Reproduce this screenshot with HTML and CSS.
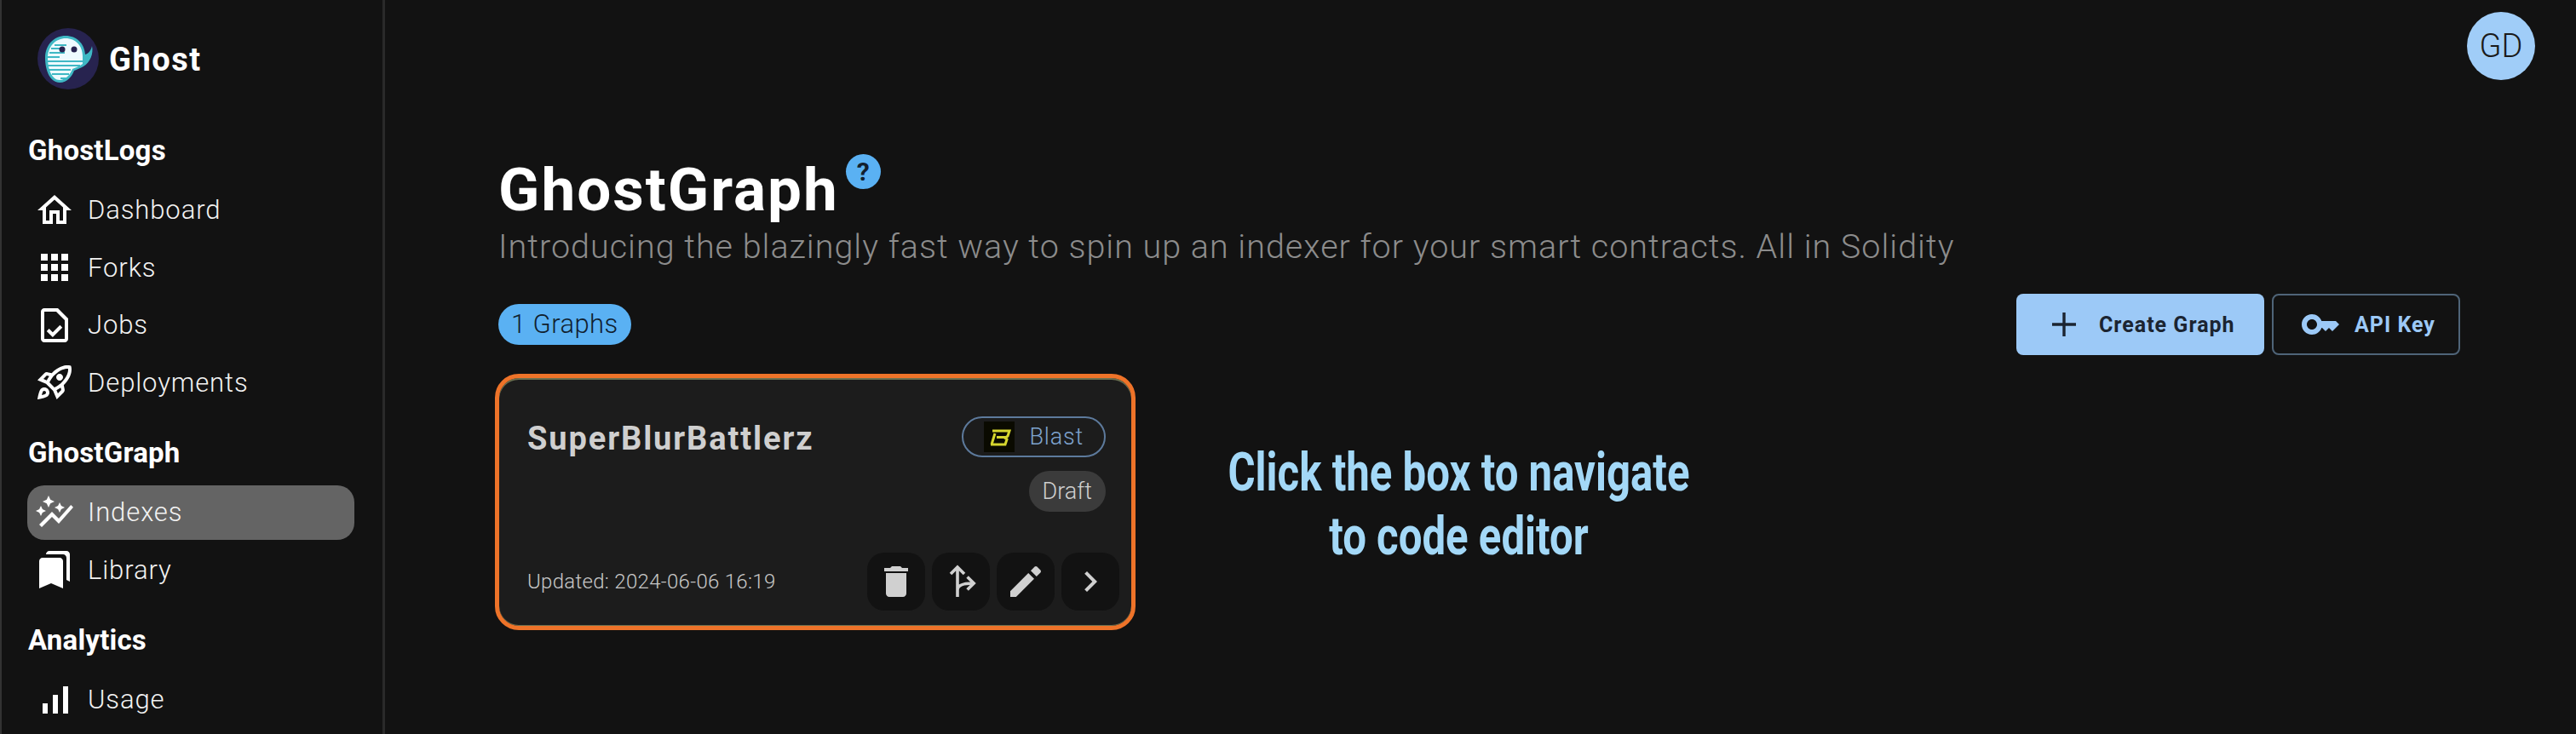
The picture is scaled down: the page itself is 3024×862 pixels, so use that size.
FILE: index.html
```html
<!DOCTYPE html>
<html lang="en">
	<head>
		<meta charset="utf-8">
		<title>GhostGraph</title>
		<link rel="stylesheet" href="styles.css">
	</head>
	<body>
		<aside class="sidebar">
			<div class="brand">
				<svg class="brand-logo" viewBox="0 0 72 72">
					<circle cx="36" cy="36" r="36" fill="#27234f"/>
					<path d="M9 35C9 19 20 9 33 9c13 0 22 9 23 22 4-1 7-5 8-10 2 9-2 19-10 24-3 2-7 3-11 5-2 6-8 14-17 14C15 64 9 50 9 35z" fill="#3fb8c4"/>
					<path d="M12 35C12 21 22 12 33 12c12 0 20 9 20 21v9c-4 3-8 4-12 6-2 6-8 13-15 13-9 0-14-13-14-26z" fill="#eefaff"/>
					<g stroke="#3fb8c4" stroke-width="2" fill="none">
						<path d="M14 29h18M12 34h14M12 39h46M12 44h38M13 49h26M17 54h20M27 59h8M20 20h14M16 24h10"/>
					</g>
					<circle cx="29" cy="25" r="3.5" fill="#27234f"/>
					<circle cx="43" cy="25" r="3.5" fill="#27234f"/>
				</svg>
				<span class="brand-name">Ghost</span>
			</div>

			<h3 class="nav-title">GhostLogs</h3>
			<a class="nav-item">
				<svg class="nav-icon" viewBox="0 0 24 24"><path d="M12 5.69l5 4.5V18h-2v-6H9v6H7v-7.81l5-4.5M12 3L2 12h3v8h6v-6h2v6h6v-8h3L12 3z"/></svg>
				Dashboard
			</a>
			<a class="nav-item">
				<svg class="nav-icon" viewBox="0 0 24 24"><path d="M4 8h4V4H4v4zm6 12h4v-4h-4v4zm-6 0h4v-4H4v4zm0-6h4v-4H4v4zm6 0h4v-4h-4v4zm6-10v4h4V4h-4zm-6 4h4V4h-4v4zm6 6h4v-4h-4v4zm0 6h4v-4h-4v4z"/></svg>
				Forks
			</a>
			<a class="nav-item">
				<svg class="nav-icon" viewBox="0 0 24 24"><path fill-rule="evenodd" d="M14 2H6c-1.1 0-2 .9-2 2v16c0 1.1.9 2 2 2h12c1.100 0 2-.9 2-2V8l-6-6zM6 4h7l5 5v11H6V4z"/><path d="M8.820 14.050L7.400 15.460 10.940 19l5.660-5.660-1.410-1.410-4.240 4.240-2.130-2.120z"/></svg>
				Jobs
			</a>
			<a class="nav-item">
				<svg class="nav-icon" viewBox="0 0 24 24"><path d="M6 15c-.83 0-1.58.34-2.12.88C2.7 17.06 2 22 2 22s4.94-.7 6.12-1.88c.54-.54.88-1.29.88-2.12 0-1.66-1.34-3-3-3zm.71 3.71c-.28.28-2.17.76-2.17.76s.47-1.88.76-2.17c.17-.19.42-.3.7-.3.55 0 1 .45 1 1 0 .28-.11.53-.29.71zm10.71-5.06c6.36-6.36 4.24-11.31 4.24-11.31S16.71.22 10.35 6.58l-2.49-.5c-.65-.13-1.33.08-1.81.55L2 10.69l5 2.14L11.17 17l2.14 5 4.05-4.05c.47-.47.68-1.15.55-1.81l-.49-2.49zM7.41 10.83l-1.91-.82 1.97-1.97 1.44.29c-.57.83-1.08 1.7-1.5 2.5zm6.58 7.67l-.82-1.91c.8-.42 1.67-.93 2.49-1.5l.29 1.44-1.96 1.97zM16 12.24c-1.32 1.32-3.38 2.4-4.04 2.73l-2.93-2.93c.32-.65 1.4-2.71 2.73-4.04 4.68-4.68 8.23-3.99 8.23-3.99s.69 3.55-3.99 8.23zM15 11c1.1 0 2-.9 2-2s-.9-2-2-2-2 .9-2 2 .9 2 2 2z"/></svg>
				Deployments
			</a>

			<h3 class="nav-title">GhostGraph</h3>
			<a class="nav-item active">
				<svg class="nav-icon" viewBox="0 0 24 24"><path d="M14.06 9.94L12 9l2.06-.94L15 6l.94 2.06L18 9l-2.06.94L15 12l-.94-2.06zM4 14l.94-2.06L7 11l-2.06-.94L4 8l-.94 2.06L1 11l2.06.94L4 14zm4.5-5l1.09-2.41L12 5.5l-2.41-1.09L8.5 2 7.41 4.41 5 5.5l2.41 1.09L8.5 9zm-4 11.5l6-6.01 4 4L23 8.93l-1.41-1.41-7.09 7.97-4-4L3 19l1.5 1.5z"/></svg>
				Indexes
			</a>
			<a class="nav-item">
				<svg class="nav-icon" viewBox="0 0 24 24"><path d="M19 18l2 1V3c0-1.1-.9-2-2-2H8.99C7.89 1 7 1.9 7 3h10c1.1 0 2 .9 2 2v13zM15 5H5c-1.1 0-2 .9-2 2v16l7-3 7 3V7c0-1.1-.9-2-2-2z"/></svg>
				Library
			</a>

			<h3 class="nav-title">Analytics</h3>
			<a class="nav-item">
				<svg class="nav-icon" viewBox="0 0 24 24"><path d="M17 4h3v16h-3V4zM5 14h3v6H5v-6zm6-5h3v11h-3V9z"/></svg>
				Usage
			</a>
		</aside>

		<main class="main">
			<header class="topbar">
				<div class="avatar">GD</div>
			</header>

			<section class="content">
				<div class="title-row">
					<h1 class="page-title">GhostGraph</h1>
					<span class="help-badge">?</span>
				</div>
				<p class="page-sub">Introducing the blazingly fast way to spin up an indexer for your smart contracts. All in Solidity</p>

				<div class="toolbar">
					<span class="count-pill">1 Graphs</span>
					<div class="toolbar-btns">
						<button class="btn btn-primary">
							<svg class="btn-icon" viewBox="0 0 28 28"><path d="M0 14h28M14 0v28" stroke="#1b2431" stroke-width="3.4" fill="none"/></svg>
							Create Graph
						</button>
						<button class="btn btn-outline">
							<svg class="btn-icon key-icon" viewBox="1 5 22 14"><path d="M21 10h-8.35C11.83 7.67 9.61 6 7 6c-3.31 0-6 2.69-6 6s2.69 6 6 6c2.61 0 4.83-1.67 5.65-4H13l2 2 2-2 2 2 4-4.04L21 10zM7 15c-1.65 0-3-1.35-3-3s1.35-3 3-3 3 1.35 3 3-1.35 3-3 3z"/></svg>
							API Key
						</button>
					</div>
				</div>

				<div class="graph-wrap">
					<article class="graph-card">
						<div class="card-top">
							<h2 class="card-name">SuperBlurBattlerz</h2>
							<div class="card-tags">
								<span class="chain-tag">
									<svg class="chain-logo" viewBox="0 0 36 36">
										<rect width="36" height="36" fill="#0a0a00"/>
										<path d="M10 11h20l-2 6-3 2.500 2 1.500-2 6H8M15 18.500h11M13 14l-4 13" stroke="#d6d62e" stroke-width="3" fill="none"/>
									</svg>
									Blast
								</span>
								<span class="status-tag">Draft</span>
							</div>
						</div>
						<div class="card-bottom">
							<span class="card-date">Updated: 2024-06-06 16:19</span>
							<div class="card-actions">
								<button class="icon-btn"><svg viewBox="0 0 24 24"><path d="M6 19c0 1.1.9 2 2 2h8c1.1 0 2-.9 2-2V7H6v12zM19 4h-3.5l-1-1h-5l-1 1H5v2h14V4z"/></svg></button>
								<button class="icon-btn"><svg viewBox="0 0 24 24"><path class="fork-line" d="M10 21V3.600M6 7.500l4-4 4 4M10 17c0-2.500 2-4 9-4M15.800 9.200l3.800 3.800-3.800 3.800"/></svg></button>
								<button class="icon-btn"><svg viewBox="0 0 24 24"><path d="M3 17.600V21h3.400L17 10.400 13.600 7zM15 5.600 18.400 9l2.300-2.300c.4-.4.4-1 0-1.400l-2-2c-.4-.4-1-.4-1.400 0z"/></svg></button>
								<button class="icon-btn"><svg viewBox="0 0 24 24"><path d="M10 6L8.590 7.410 13.170 12l-4.580 4.590L10 18l6-6z"/></svg></button>
							</div>
						</div>
					</article>
				</div>
				<div class="note">
					<span class="note-text">Click the box to navigate<br>to code editor</span>
				</div>
			</section>
		</main>
	</body>
</html>
```

FILE: styles.css
```css
html,body{ margin: 0; height: 100%; overflow: hidden; background: #121212; }
body{ display: flex; font-family: Roboto, "Liberation Sans", sans-serif; color: #fff; }
h1,h2,h3,p{ margin: 0; }
button{ font-family: inherit; cursor: pointer; }

/* sidebar */
.sidebar{ flex: 0 0 452px; box-sizing: border-box; height: 862px; padding: 33px 33px 0 30px; border-left: 2px solid #333; border-right: 3px solid #2a2a2a; overflow: hidden; }
.brand{ display: flex; align-items: center; gap: 12px; height: 72px; margin: 0 0 52px 12px; }
.brand-logo{ width: 72px; height: 72px; flex: none; }
.brand-name{ position: relative; top: 1px; font-size: 38px; font-weight: 700; letter-spacing: 1.500px; }
.nav-title{ height: 40px; line-height: 40px; margin: 31px 0 18px 1px; font-size: 33px; font-weight: 700; letter-spacing: .2px; }
.brand + .nav-title{ margin-top: 0; }
.nav-item{ display: flex; align-items: center; gap: 15px; height: 63.500px; margin-bottom: 4px; padding-left: 8px; border-radius: 20px; font-size: 31px; font-weight: 300; letter-spacing: .9px; color: #f2f2f2; }
.nav-item.active{ background: #646464; }
.nav-icon{ width: 48px; height: 48px; flex: none; fill: #fff; }

/* main */
.main{ flex: 1; min-width: 0; }
.topbar{ display: flex; justify-content: flex-end; padding: 14px 48px 0; }
.avatar{ width: 80px; height: 80px; border-radius: 50%; background: #a0cdf8; color: #1a1a1a; font-size: 38px; line-height: 80px; text-align: center; font-weight: 300; }
.content{ position: relative; padding: 0 136px 0 133px; }
.title-row{ display: flex; align-items: flex-start; gap: 8px; height: 84px; margin-top: 87px; }
.page-title{ font-size: 71px; line-height: 84px; font-weight: 700; letter-spacing: 2px; }
.help-badge{ display: block; width: 41px; height: 41px; border-radius: 50%; background: #5ab1f3; color: #12202e; font-size: 30px; line-height: 41px; font-weight: 700; text-align: center; }
.page-sub{ margin-top: 2px; font-size: 39.500px; line-height: 46px; font-weight: 300; letter-spacing: 1px; color: #8c8c8c; }
.toolbar{ display: flex; justify-content: space-between; margin-top: 32px; }
.count-pill{ align-self: flex-start; margin-top: 12px; height: 48px; padding: 0 15px; border-radius: 24px; background: #5ab1f3; color: #10202e; font-size: 31px; font-weight: 300; letter-spacing: .4px; line-height: 48px; }
.toolbar-btns{ display: flex; gap: 9px; }
.btn{ display: flex; align-items: center; height: 72px; border-radius: 8px; font-size: 25px; font-weight: 700; letter-spacing: 1px; }
.btn-primary{ width: 291px; padding: 0 0 0 42px; gap: 27px; border: 0; background: #9cc9f7; color: #1b2431; }
.btn-outline{ width: 221px; padding: 0 0 0 33px; gap: 18px; border: 2px solid #4f6478; background: none; color: #9cc9f7; }
.btn-icon{ width: 28px; height: 28px; flex: none; }
.key-icon{ width: 44px; fill: #9cc9f7; }

/* card */
.graph-wrap{ margin: 22px 0 0 -4px; }
.graph-card{ display: flex; flex-direction: column; justify-content: space-between; box-sizing: border-box; width: 752px; height: 301px; padding: 45px 14px 18px 33px; border: 5px solid #ee7329; border-radius: 28px; background: #1c1c1c; box-shadow: inset 0 2px 0 #6a6f4f, inset 0 -1px 0 #6a6f4f; }
.card-top{ display: flex; justify-content: space-between; padding-right: 16px; }
.card-name{ margin-top: 4px; font-size: 38px; line-height: 44px; font-weight: 700; letter-spacing: 1.900px; color: #cfcfcf; }
.card-tags{ display: flex; flex-direction: column; align-items: flex-end; gap: 16px; }
.chain-tag{ display: flex; align-items: center; gap: 18px; box-sizing: border-box; height: 48px; padding: 0 24px; border: 2px solid #5d7a9c; border-radius: 24px; font-size: 27px; font-weight: 300; letter-spacing: .8px; color: #7fa4cf; }
.chain-logo{ width: 36px; height: 36px; flex: none; }
.status-tag{ height: 48px; padding: 0 16px; border-radius: 24px; background: #3b3b3b; font-size: 27px; line-height: 48px; font-weight: 300; color: #cfcfcf; }
.card-bottom{ display: flex; justify-content: space-between; align-items: center; }
.card-date{ font-size: 24px; font-weight: 300; letter-spacing: .3px; color: #c8c8c8; }
.card-actions{ display: flex; gap: 8px; }
.icon-btn{ display: flex; align-items: center; justify-content: center; width: 68px; height: 68px; padding: 0; border: 0; border-radius: 20px; background: #121212; }
.icon-btn svg{ width: 48px; height: 48px; fill: #d0d0d0; }
.icon-btn .fork-line{ fill: none; stroke: #d0d0d0; stroke-width: 1.800; }

/* annotation over the page */
.note{ position: absolute; left: 860px; top: 336px; width: 800px; text-align: center; }
.note-text{ display: inline-block; font-size: 63px; line-height: 75px; font-weight: 700; color: #a3d8f7; transform: scaleX(.78); }
```
